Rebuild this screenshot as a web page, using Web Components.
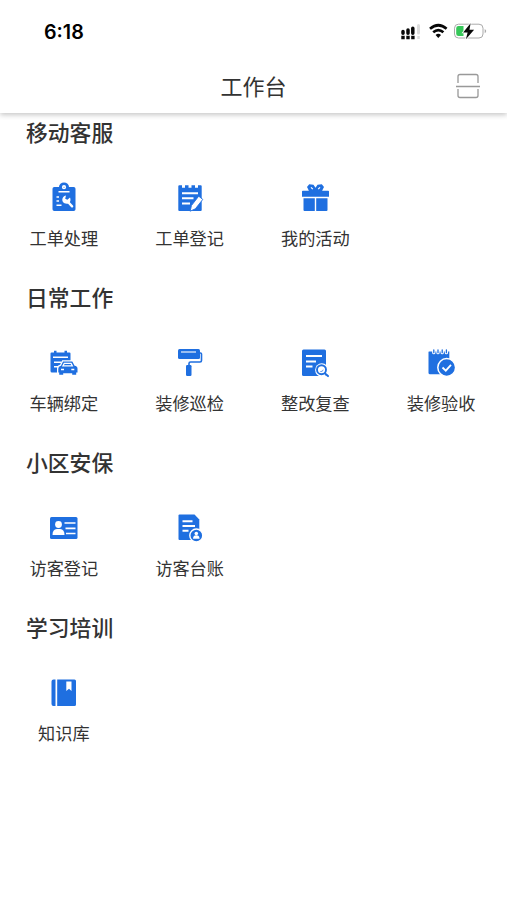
<!DOCTYPE html>
<html lang="zh-CN">
<head>
<meta charset="utf-8">
<title>工作台</title>
<style>
html, body { margin: 0; background: #fff; }
body { height: 900px; overflow: hidden; color: #333; font-family: "Noto Sans CJK SC", sans-serif; }
</style>
</head>
<body>
<work-bench></work-bench>
<script>
const icons = {
  process: `<path fill="currentColor" d="M6.3 5H11a5 4.500 0 0 1 10 0h4.700q1.800 0 1.800 1.800v20.400q0 1.800-1.800 1.800H6.300q-1.800 0-1.800-1.800V6.800Q4.500 5 6.300 5z"/><g fill="none" stroke="#fff"><circle cx="16" cy="5.200" r="1.300" stroke-width="1.600"/><path stroke-width="1.500" d="M10.500 9.800h11M8.500 15h2.500M8.500 19h2.500M8.500 23.200h5"/><path stroke-width="2.400" stroke-linecap="round" d="M20.500 20.500l3.600 3.800"/></g><path fill="#fff" d="M18 13.500l-.8 3.300 2.200 1 2.600-2.300c1.700 4-1.200 7-4.600 6.100-4.200-1-4.200-7 .6-8.100z"/>`,
  register: `<path fill="currentColor" d="M5.300 3.200H8v2.500h3V3.200h3.500v2.500h3V3.200H21v2.500h3V3.200h2.700q1 0 1 1V28q0 1-1 1H5.300q-1 0-1-1V4.200q0-1 1-1z"/><path fill="none" stroke="#fff" stroke-width="2" d="M8 11.200h16M8 16.300h11.500M8 21.500h8"/><path fill="#fff" stroke="currentColor" stroke-width=".9" d="M16.200 29.200l1.200-5.600 7.300-9.400 4.100 3.200-7.400 9.400z"/>`,
  gift: `<path fill="currentColor" d="M3.800 8.800h6.100L8 5.100l2.200-2.900 4.300.6 2 3 2-3 4.300-.6L25 5.100l-1.900 3.700h6.100q.8 0 .8.800v5.200H3V9.600q0-.8.800-.8zM4.500 16.200h11.300V29H5.500q-1 0-1-1zM17.200 16.200h11.300V28q0 1-1 1H17.200z"/><path fill="none" stroke="#fff" stroke-width="1.200" d="M12 5.300l1.800 1.800M21 5.300l-1.800 1.800"/>`,
  car: `<path fill="currentColor" d="M3.500 5.500H6V3.800h2.500v1.700h8V3.800H19v1.700h2.500q1 0 1 1v17q0 2-2 2H4q-1.500 0-1.500-1.500V6.500q0-1 1-1z"/><path stroke="#fff" stroke-width="1.400" d="M5 10.200h15M6 15.300h7.500M6 19.800h4"/><path fill="currentColor" stroke="#fff" stroke-width="2.600" paint-order="stroke" d="M15 14.500h9.300l2.300 4.200q2.900.5 2.900 2.800v4h-1.300v2.300h-4v-1.500h-9v1.500h-4v-2.300h-.9v-4q0-2.300 2.700-2.800z"/><path fill="none" stroke="#fff" stroke-width="1.300" d="M15 18.800l1.300-2.500H23l1.300 2.500zM13 22.500h3M23.300 22.500h3"/>`,
  roller: `<rect x="4" y="2" width="22" height="10" rx="1.500" fill="currentColor"/><path stroke="#fff" stroke-width="1.100" d="M7 5h15"/><path fill="none" stroke="currentColor" stroke-width="1.600" d="M26 6h.5q1 0 1 1v6.500q0 1.500-1.500 1.500h-9.500Q15 15 15 16.500V19"/><rect x="12" y="18" width="5.500" height="11" rx="1.200" fill="currentColor"/>`,
  review: `<rect x="3" y="2.500" width="24" height="26.500" rx="1.500" fill="currentColor"/><path stroke="#fff" stroke-width="1.900" d="M7 9h16M7 14.500h10M7 19.500h6.500"/><circle cx="22.800" cy="23" r="6.700" fill="#fff"/><circle cx="22.500" cy="22.700" r="4.500" fill="#fff" stroke="currentColor" stroke-width="1.900"/><path stroke="currentColor" stroke-width="2" stroke-linecap="round" d="M26 26.400l3 2.700"/><path fill="none" stroke="currentColor" stroke-width=".7" d="M21.300 24.500q2.500.5 2.900-1.800"/>`,
  accept: `<path fill="currentColor" d="M4 4.500h20.300v22.700H5q-1.500 0-1.500-1.500V5q0-.5.500-.5z"/><path fill="none" stroke="#fff" stroke-width="3.300" stroke-linecap="round" d="M8.800 3v2.700M13 3v2.700M17.200 3v2.700M21.400 3v2.700"/><path fill="none" stroke="currentColor" stroke-width="1.300" stroke-linecap="round" d="M8.800 3v2.700M13 3v2.700M17.200 3v2.700M21.400 3v2.700"/><circle cx="21.700" cy="20.500" r="8.900" fill="currentColor" stroke="#fff" stroke-width="1.500"/><path fill="none" stroke="#fff" stroke-width="1.800" d="M17.500 20.500l3.300 3.200 5.200-5.800"/>`,
  card: `<rect x="2" y="5" width="27.500" height="22" rx="1.500" fill="currentColor"/><g fill="#fff"><circle cx="10.500" cy="12.500" r="3.400"/><path d="M4.500 23q0-5.500 4.300-6h3.400q4.300.5 4.300 6z"/></g><path stroke="#fff" stroke-width="1.700" d="M16.500 11h11M17.500 16.300h10M18 21.500h9.500"/>`,
  ledger: `<path fill="currentColor" d="M5.500 2.500h15l4.800 5V26q0 2-2 2H5.500q-1 0-1-1V3.500q0-1 1-1z"/><path stroke="#fff" stroke-width="1.900" d="M8.500 9.200h10M8.500 14h12.500M8.500 18.800h6"/><circle cx="22.300" cy="23.500" r="6.500" fill="currentColor" stroke="#fff" stroke-width="1.400"/><circle cx="22.300" cy="21.500" r="1.800" fill="#fff"/><path fill="#fff" d="M19 26.700q.2-3.400 3.300-3.400t3.300 3.400z"/>`,
  book: `<path fill="currentColor" d="M5.500 2.500h2V29h-2q-2 0-2-2V4.500q0-2 2-2zM9.200 2.500h17.300q1.500 0 1.500 1.500v23.500q0 1.500-1.500 1.500H9.200z"/><path fill="#fff" d="M18.300 4.500h5.200v9.500L21 11.700 18.300 14z"/>`
};
const base = '<style>:host{display:block;box-sizing:border-box}svg{display:block;overflow:visible}</style>';
class BaseElement extends HTMLElement {
  connectedCallback() {
    if (!this.shadowRoot) this.attachShadow({ mode: 'open' }).innerHTML = base + this.view();
  }
}
customElements.define('status-bar', class extends BaseElement {
  view() {
    return `<style>
:host{display:flex;justify-content:space-between;align-items:center;height:62px;padding:0 20px 0 44px;color:#000}
time{padding-top:2px;font:600 19.700px/24px Inter,"Liberation Sans",sans-serif}
svg{flex:none}
</style><time>6:18</time>
<svg width="87" height="22" viewBox="400 20 87 22" aria-hidden="true">
<path d="M403 31.500v1.700M408 30v3.200M412.800 28.200v5" fill="none" stroke="#080808" stroke-width="3.500" stroke-linecap="round"/>
<path d="M418.500 25.500v7.500" stroke="#ddd" stroke-width="3" stroke-linecap="round"/>
<path d="M401.300 37.500h3.400M406.300 37.500h3.400M411.200 37.500h3.400" stroke="#080808" stroke-width="3.500"/><path d="M417.300 37.500h2.500" stroke="#ddd" stroke-width="3"/>
<path d="M430 28.700q8.300-6.900 16.600 0M433.200 32.200q5.100-4.300 10.200 0" fill="none" stroke="#080808" stroke-width="2.700"/><path d="M435.600 35q2.700-2.300 5.400 0l-2.700 3z" fill="#080808"/>
<rect x="454.500" y="24.200" width="28.500" height="13.800" rx="4" fill="#fff" stroke="#aaa"/>
<path d="M458.500 26h5v10h-5q-2.300 0-2.300-2.300v-5.400q0-2.300 2.300-2.300z" fill="#36c759"/><path d="M484.700 29q3 2 0 4.300z" fill="#aaa"/>
<path d="M470.600 23.300l-7.500 9.100h4.500l-1.700 6.900 8.200-9.600h-4.600z" fill="#080808" stroke="#fff" stroke-width="1.500" paint-order="stroke"/>
</svg>`;
  }
});
customElements.define('page-header', class extends BaseElement {
  view() {
    return `<style>
:host{display:grid;grid-template-columns:1fr auto 1fr;align-items:center;height:51px;padding:0 26px 3px;box-shadow:0 2px 5px rgba(0,0,0,.22);clip-path:inset(0 0 -8px 0)}
h1{grid-column:2;margin:-2px 0 0;font-size:22px;font-weight:400;line-height:32px}
svg{justify-self:end}
</style><h1><slot></slot></h1>
<svg width="26" height="26" viewBox="0 0 26 26" fill="none" stroke="#999" stroke-width="1.300" aria-hidden="true"><path d="M3 10V3.500q0-2 2-2h16q2 0 2 2V10M3 16v6.500q0 2 2 2h16q2 0 2-2V16M1 13.500h24"/></svg>`;
  }
});
customElements.define('app-entry', class extends BaseElement {
  view() {
    return `<style>
:host{display:flex;flex-direction:column;align-items:center;gap:12px}
svg{color:#1f6fe0}
span{font-size:17.200px;line-height:24px;white-space:nowrap}
</style><svg width="32" height="32" viewBox="0 0 32 32" aria-hidden="true">${icons[this.getAttribute('icon')]}</svg><span><slot></slot></span>`;
  }
});
customElements.define('app-section', class extends BaseElement {
  view() {
    return `<style>
:host{height:165px}
h2{margin:0;padding-left:26px;font-size:21.800px;font-weight:500;line-height:32px}
div{display:grid;grid-template-columns:repeat(4,1fr);padding:34px 3px 0 1px}
</style><h2>${this.getAttribute('heading')}</h2><div><slot></slot></div>`;
  }
});
customElements.define('work-bench', class extends BaseElement {
  view() {
    return `<style>main{padding-top:3px}</style>
<status-bar></status-bar><page-header>工作台</page-header><main>
<app-section heading="移动客服"><app-entry icon="process">工单处理</app-entry><app-entry icon="register">工单登记</app-entry><app-entry icon="gift">我的活动</app-entry></app-section>
<app-section heading="日常工作"><app-entry icon="car">车辆绑定</app-entry><app-entry icon="roller">装修巡检</app-entry><app-entry icon="review">整改复查</app-entry><app-entry icon="accept">装修验收</app-entry></app-section>
<app-section heading="小区安保"><app-entry icon="card">访客登记</app-entry><app-entry icon="ledger">访客台账</app-entry></app-section>
<app-section heading="学习培训"><app-entry icon="book">知识库</app-entry></app-section>
</main>`;
  }
});
</script>
</body>
</html>
